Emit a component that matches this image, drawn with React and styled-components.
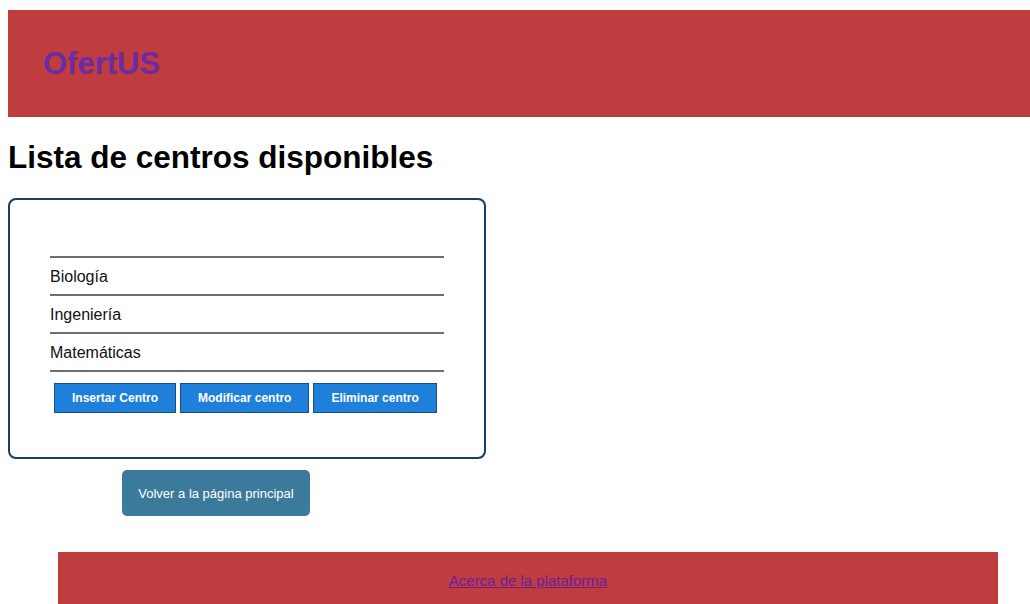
import React from 'react';
import styled, { createGlobalStyle } from 'styled-components';

const GlobalStyle = createGlobalStyle`
  html {
    overflow: hidden;
  }
  body {
    margin: 8px 0 8px 8px;
    font-family: "Liberation Sans", Arial, sans-serif;
    background: #fff;
  }
`;

const Header = styled.header`
  margin-top: 2px;
  height: 107px;
  background: #bf3d3e;
  display: flex;
  align-items: center;
  padding-left: 35px;
`;

const Logo = styled.span`
  font-size: 31px;
  font-weight: bold;
  color: #6a2ba3;
`;

const Title = styled.h1`
  font-size: 31.5px;
  line-height: 37px;
  font-weight: bold;
  margin: 22px 0;
  color: #000;
`;

const Card = styled.section`
  width: 478px;
  height: 261px;
  box-sizing: border-box;
  border: 2px solid #173f66;
  border-radius: 8px;
  padding: 56px 40px 0;
`;

const List = styled.ul`
  list-style: none;
  margin: 0;
  padding: 0;
  border-top: 2px solid #6e6e6e;
`;

const Item = styled.li`
  height: 38px;
  display: flex;
  align-items: center;
  padding-top: 2px;
  box-sizing: border-box;
  font-size: 16px;
  color: #111;
  border-bottom: 2px solid #6e6e6e;
`;

const Actions = styled.div`
  display: flex;
  gap: 4px;
  margin: 11px 0 0 4px;
`;

const ActionButton = styled.button`
  height: 30px;
  padding: 0 17px;
  border: 1px solid #1d4d7c;
  background: #1f80dc;
  color: #fff;
  font-family: "Liberation Sans", Arial, sans-serif;
  font-size: 12px;
  font-weight: bold;
`;

const BackButton = styled.button`
  display: block;
  margin: 11px 0 0 114px;
  width: 188px;
  height: 46px;
  border: none;
  border-radius: 5px;
  background: #3b7a9b;
  color: #fff;
  font-family: "Liberation Sans", Arial, sans-serif;
  font-size: 13px;
`;

const Footer = styled.footer`
  margin: 36px 0 0 50px;
  width: 940px;
  height: 80px;
  background: #bf3d3e;
  padding-top: 20px;
  box-sizing: border-box;
  text-align: center;
`;

const FooterLink = styled.a`
  font-size: 15px;
  color: #6a1f9a;
  text-decoration: underline;
`;

const centros = ['Biología', 'Ingeniería', 'Matemáticas'];

export default function App() {
  return (
    <>
      <GlobalStyle />
      <Header>
        <Logo>OfertUS</Logo>
      </Header>
      <Title>Lista de centros disponibles</Title>
      <Card>
        <List>
          {centros.map((c) => (
            <Item key={c}>{c}</Item>
          ))}
        </List>
        <Actions>
          <ActionButton>Insertar Centro</ActionButton>
          <ActionButton>Modificar centro</ActionButton>
          <ActionButton>Eliminar centro</ActionButton>
        </Actions>
      </Card>
      <BackButton>Volver a la página principal</BackButton>
      <Footer>
        <FooterLink href="#">Acerca de la plataforma</FooterLink>
      </Footer>
    </>
  );
}
